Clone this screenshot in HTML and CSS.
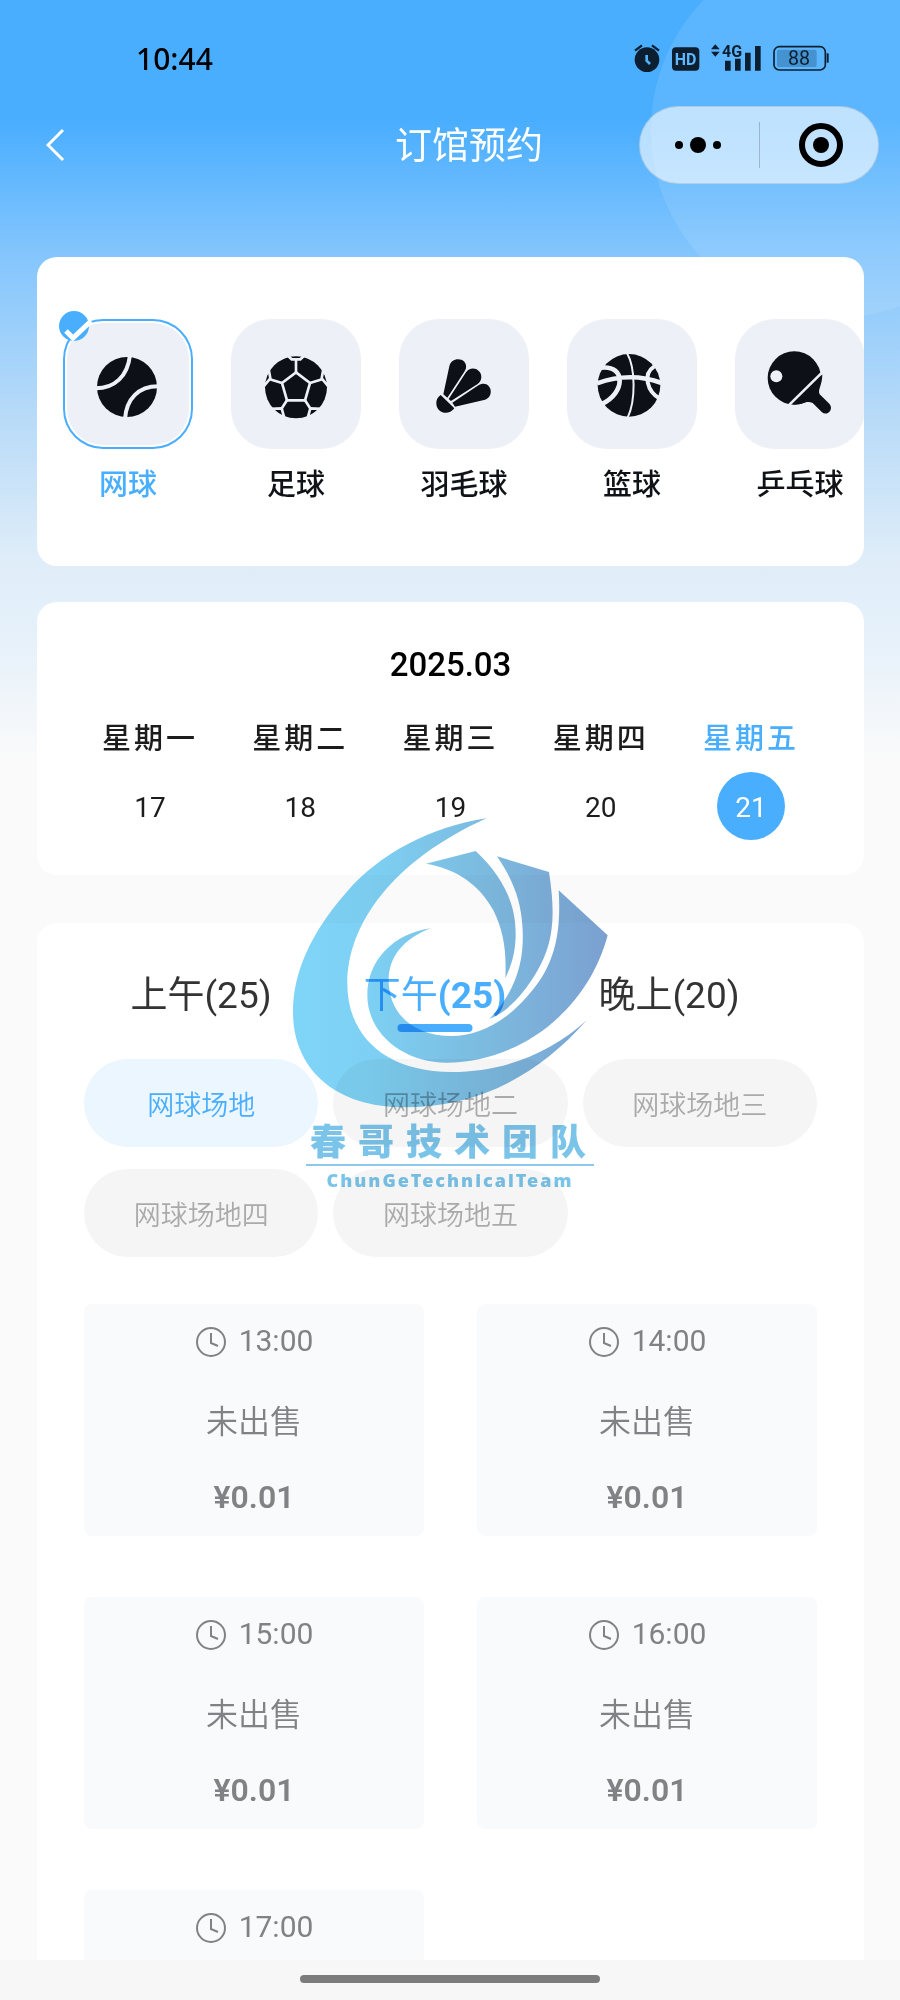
FILE: index.html
```html
<!DOCTYPE html>
<html lang="zh-CN">
<head>
    <meta charset="UTF-8">
    <meta name="viewport" content="width=device-width, initial-scale=1">
    <title>订馆预约</title>
    <link rel="stylesheet" href="styles.css">
</head>
<body>
    <div class="app">
        <header class="header">
            <div class="status-bar">
                <span class="clock">10:44</span>
                <div class="status-icons">
                    <svg class="icon-alarm" viewBox="0 0 78 84">
                        <circle cx="39" cy="47" r="37" fill="#0b1f30"/>
                        <path d="M3 20L24 4M54 4l21 16" stroke="#0b1f30" stroke-width="7" fill="none"/>
                        <path d="M38 33v17l10 10" stroke="#52b1fd" stroke-width="8" fill="none"/>
                    </svg>
                    <svg class="icon-hd" viewBox="0 0 82 84">
                        <rect x="0" y="10" width="82" height="70" rx="12" fill="#0b1f30"/>
                        <text x="41" y="62" text-anchor="middle" font-size="48">HD</text>
                    </svg>
                    <svg class="icon-signal" viewBox="0 0 150 84">
                        <path d="M0 16L13 1l13 15zM0 23h26L13 38z" fill="#0b1f30"/>
                        <text x="33" y="38" font-size="48">4G</text>
                        <path d="M42 50h17v30H42zM72 44h17v36H72zM102 26h17v54h-17zM132 6h17v74h-17z" fill="#0b1f30"/>
                    </svg>
                    <svg class="icon-battery" viewBox="0 0 168 84">
                        <rect x="3" y="8" width="154" height="70" rx="16" fill="none" stroke="#0b1f30" stroke-width="5"/>
                        <rect x="12" y="17" width="119" height="52" rx="6" fill="#4592d0"/>
                        <path d="M164 28v28" stroke="#0b1f30" stroke-width="6"/>
                        <text x="78" y="64" text-anchor="middle" font-size="59">88</text>
                    </svg>
                </div>
            </div>
            <nav class="nav-bar">
                <button class="back-btn" aria-label="返回">
                    <svg viewBox="0 0 20 34"><path d="M17 2L2 17l15 15" fill="none" stroke="#fff" stroke-width="3"/></svg>
                </button>
                <h1 class="title">订馆预约</h1>
                <div class="capsule">
                    <button class="capsule-btn" aria-label="更多">
                        <svg viewBox="0 0 48 48"><circle cx="5" cy="24" r="4"/><circle cx="24" cy="24" r="8"/><circle cx="43" cy="24" r="4"/></svg>
                    </button>
                    <button class="capsule-btn" aria-label="关闭">
                        <svg viewBox="0 0 48 48"><circle cx="24" cy="24" r="19" fill="none" stroke="#000" stroke-width="6"/><circle cx="24" cy="24" r="8"/></svg>
                    </button>
                </div>
            </nav>
        </header>

        <main class="content">
            <section class="card sports">
                <button class="sport active">
                    <span class="sport-icon">
                        <svg viewBox="0 0 390 390">
                            <circle cx="192" cy="204" r="90"/>
                            <path class="line" stroke-width="12" d="M201 108C194 172 155 208 98 208M286 202C226 202 190 240 186 300"/>
                        </svg>
                    </span>
                    <span class="sport-name">网球</span>
                    <svg class="check" viewBox="0 0 36 36">
                        <circle cx="16" cy="16" r="15" fill="#4aaeff"/>
                        <path d="M8 21l7 7L33 11" fill="none" stroke="#fff" stroke-width="5"/>
                    </svg>
                </button>
                <button class="sport">
                    <span class="sport-icon">
                        <svg viewBox="0 0 390 390">
                            <circle cx="195" cy="205" r="93"/>
                            <path class="line" stroke-width="8" d="M195 160L237 192L222 244H168L153 192Z"/>
                            <path class="line" stroke-width="8" d="M195 160V122M237 192L276 180M222 244L239 270M168 244L151 270M153 192L114 180"/>
                            <path class="line" stroke-width="8" d="M166 106L182 121H208L224 106M278 145L272 178L292 202M292 270L238 268L228 304M98 270L152 268L162 304M112 145L118 178L98 202"/>
                        </svg>
                    </span>
                    <span class="sport-name">足球</span>
                </button>
                <button class="sport">
                    <span class="sport-icon">
                        <svg viewBox="0 0 390 390">
                            <path d="M133 226L151 142C157 110 207 115 201 148C200 152 198 155 196 158L145 236Z"/>
                            <path d="M149 240L200 161C218 134 254 154 246 181C244 188 241 191 236 195L156 246Z"/>
                            <path d="M160 251L236 200C274 176 292 233 255 243L168 263Z"/>
                            <path d="M125 228L166 268C148 292 114 282 112 255C111 244 116 234 125 228Z"/>
                        </svg>
                    </span>
                    <span class="sport-name">羽毛球</span>
                </button>
                <button class="sport">
                    <span class="sport-icon">
                        <svg viewBox="0 0 390 390">
                            <circle cx="186" cy="199" r="94"/>
                            <path class="line" stroke-width="6" d="M180 102C206 148 206 245 182 296"/>
                            <path class="line" stroke-width="14" d="M90 193Q190 157 284 192M104 146C176 138 176 222 104 255"/>
                            <path class="line" stroke-width="12" d="M262 142C226 165 240 218 280 240"/>
                        </svg>
                    </span>
                    <span class="sport-name">篮球</span>
                </button>
                <button class="sport">
                    <span class="sport-icon">
                        <svg viewBox="0 0 390 390">
                            <circle cx="178" cy="177" r="80"/>
                            <path d="M262 166C262 200 247 212 254 226L283 254C298 272 276 292 261 280L233 252C212 243 204 259 172 256Z"/>
                            <circle class="ball" cx="124" cy="172" r="18"/>
                            <path class="line" stroke-width="8" d="M158 262L264 158"/>
                        </svg>
                    </span>
                    <span class="sport-name">乒乓球</span>
                </button>
            </section>

            <section class="card calendar">
                <h2 class="month">2025.03</h2>
                <div class="week">
                    <button class="day"><span class="weekday">星期一</span><span class="date">17</span></button>
                    <button class="day"><span class="weekday">星期二</span><span class="date">18</span></button>
                    <button class="day"><span class="weekday">星期三</span><span class="date">19</span></button>
                    <button class="day"><span class="weekday">星期四</span><span class="date">20</span></button>
                    <button class="day active"><span class="weekday">星期五</span><span class="date">21</span></button>
                </div>
            </section>

            <section class="card booking">
                <div class="tabs">
                    <button class="tab">上午(25)</button>
                    <button class="tab active">下午<b>(25)</b></button>
                    <button class="tab">晚上(20)</button>
                </div>
                <div class="courts">
                    <button class="court active">网球场地</button>
                    <button class="court">网球场地二</button>
                    <button class="court">网球场地三</button>
                    <button class="court">网球场地四</button>
                    <button class="court">网球场地五</button>
                </div>
                <div class="slots">
                    <div class="slot">
                        <div class="time"><svg viewBox="0 0 32 32"><circle cx="16" cy="17" r="14"/><path d="M16 8v10l7 3"/></svg>13:00</div>
                        <div class="state">未出售</div>
                        <div class="price">¥0.01</div>
                    </div>
                    <div class="slot">
                        <div class="time"><svg viewBox="0 0 32 32"><circle cx="16" cy="17" r="14"/><path d="M16 8v10l7 3"/></svg>14:00</div>
                        <div class="state">未出售</div>
                        <div class="price">¥0.01</div>
                    </div>
                    <div class="slot">
                        <div class="time"><svg viewBox="0 0 32 32"><circle cx="16" cy="17" r="14"/><path d="M16 8v10l7 3"/></svg>15:00</div>
                        <div class="state">未出售</div>
                        <div class="price">¥0.01</div>
                    </div>
                    <div class="slot">
                        <div class="time"><svg viewBox="0 0 32 32"><circle cx="16" cy="17" r="14"/><path d="M16 8v10l7 3"/></svg>16:00</div>
                        <div class="state">未出售</div>
                        <div class="price">¥0.01</div>
                    </div>
                    <div class="slot">
                        <div class="time"><svg viewBox="0 0 32 32"><circle cx="16" cy="17" r="14"/><path d="M16 8v10l7 3"/></svg>17:00</div>
                    </div>
                </div>
            </section>
        </main>

        <footer class="bottom-bar"><div class="home-indicator"></div></footer>

        <!-- team watermark -->
        <div class="watermark">
            <svg viewBox="60 50 960 880">
                <defs>
                    <linearGradient id="wm" gradientUnits="userSpaceOnUse" x1="69" y1="0" x2="1013" y2="0">
                        <stop offset="0" stop-color="#7fd5f8"/>
                        <stop offset="0.25" stop-color="#7dd0f3"/>
                        <stop offset="0.6" stop-color="#7cbbe0"/>
                        <stop offset="1" stop-color="#7ba0d0"/>
                    </linearGradient>
                </defs>
                <g fill="url(#wm)">
                    <path d="M650 54C480 80 330 160 230 275C120 400 69 520 69 635C69 810 200 920 400 921C620 921 800 830 950 660C840 760 700 815 545 815C350 815 232 710 232 550C232 370 370 180 650 54Z"/>
                    <path d="M482 384C370 400 292 480 292 585C292 700 400 787 530 787C740 787 950 640 1013 405L866 270C874 400 855 500 770 590C700 670 620 707 545 707C430 707 356 640 356 540C356 470 400 415 482 384Z"/>
                    <path d="M681 168L837 215C858 350 850 430 800 515C755 590 710 635 658 656C740 570 765 480 757 375C752 300 730 240 681 168Z"/>
                    <path d="M468 190L617 152C700 230 737 310 737 400C737 450 727 490 706 533C710 450 700 390 670 330C630 255 560 205 468 190Z"/>
                </g>
            </svg>
            <div class="team-name">春哥技术团队</div>
            <div class="team-sub">ChunGeTechnicalTeam</div>
        </div>
    </div>
</body>
</html>
```

FILE: styles.css
```css
* { box-sizing: border-box; margin: 0; padding: 0; }
body {
    font-family: Roboto, "Noto Sans CJK SC", sans-serif;
    color: #0f1216;
    background-color: #fafafa;
}
button { border: none; background: none; font: inherit; color: inherit; cursor: pointer; }
svg { display: block; }

.app {
    position: relative;
    display: flex;
    flex-direction: column;
    height: 100vh;
    overflow: hidden;
    background: linear-gradient(to bottom, #4aaeff 0, #4aaeff 122px, #82c5fd 250px, #b9dbf8 420px, #dfedf9 560px, #e6f1fa 640px, #fafafa 760px);
}
/* pale bubble in the top right corner */
.app::before {
    content: "";
    position: absolute;
    top: -57px; right: -125px;
    width: 374px; height: 374px;
    border-radius: 50%;
    background-color: rgba(255, 255, 255, 0.1);
}

/* header */
.header { position: relative; padding-top: 40px; }
.status-bar {
    display: flex; justify-content: space-between; align-items: center;
    height: 36px; padding: 0 71px 0 136px;
}
.clock { font-family: "Noto Sans", sans-serif; font-size: 30px; font-weight: 500; color: #000; }
.status-icons { display: flex; gap: 12px; }
.status-icons svg { height: 28px; overflow: visible; }
.status-icons text { font-family: Roboto, sans-serif; font-weight: 700; fill: #0b1f30; }
.status-icons .icon-hd text { fill: #5db6fe; }
.status-icons .icon-battery text { font-weight: 400; }

.nav-bar {
    display: grid;
    grid-template-columns: 258px 1fr 240px;
    align-items: center;
    margin-top: 30px;
    padding: 0 21px 0 41px;
}
.back-btn { width: 40px; height: 60px; padding-left: 5px; }
.back-btn svg { width: 20px; height: 34px; }
.title { padding-top: 4px; font-size: 37px; font-weight: 400; color: #fff; text-align: center; line-height: 50px; }
.capsule {
    display: flex;
    height: 78px;
    border: 1px solid rgba(0, 0, 0, 0.1);
    border-radius: 39px;
    background-color: rgba(255, 255, 255, 0.6);
}
.capsule-btn { flex: 1; display: flex; justify-content: center; align-items: center; position: relative; padding-right: 4px; }
.capsule-btn svg { width: 48px; height: 48px; }
.capsule-btn + .capsule-btn { padding: 0 0 0 4px; }
.capsule-btn + .capsule-btn::before {
    content: "";
    position: absolute; left: 0; top: 15px; bottom: 15px;
    width: 1px;
    background-color: rgba(0, 0, 0, 0.2);
}

/* cards */
.content { position: relative; flex: 1; min-height: 0; overflow: hidden; padding: 73px 36px 0 37px; }
.card { border-radius: 20px; background-color: #fff; }

.sports {
    display: flex;
    gap: 38px;
    padding: 62px 0 61px 26px;
    overflow: hidden;
}
.sport { position: relative; flex: none; width: 130px; }
.sport-icon {
    display: block;
    height: 130px;
    border-radius: 40px;
    background-color: #edf0f6;
    overflow: hidden;
}
.sport-icon svg { width: 130px; height: 130px; fill: #0d1117; }
.sport-icon .line { fill: none; stroke: #edf0f6; }
.sport-icon .ball { fill: #edf0f6; }
.sport-name { display: block; margin-top: 16px; font-size: 29px; font-weight: 500; line-height: 40px; }
.sport.active .sport-icon {
    box-shadow: inset 0 0 0 2px #4aaeff, inset 0 0 0 4px #fff;
}
.sport.active .sport-name { color: #4aaeff; }
.check { position: absolute; left: -5px; top: -9px; width: 36px; height: 36px; }

.calendar { margin-top: 36px; padding: 43px 38px 35px; }
.month { font-size: 33px; font-weight: 500; line-height: 40px; text-align: center; color: #000; }
.week { display: flex; margin-top: 34px; }
.day { flex: 1; display: flex; flex-direction: column; align-items: center; color: #1c1c1c; }
.weekday { font-size: 29px; font-weight: 500; line-height: 40px; letter-spacing: 3px; }
.date {
    width: 68px; height: 68px;
    margin-top: 13px;
    border-radius: 50%;
    font-size: 28px; line-height: 71px;
}
.day.active .weekday { color: #4aaeff; }
.day.active .date { background-color: #4aaeff; color: #fff; }

.booking { margin-top: 48px; padding: 47px 47px 46px; }
.tabs { display: flex; padding-right: 31px; }
.tab {
    flex: 1;
    position: relative;
    padding-bottom: 10px;
    font-size: 37px; font-weight: 400; line-height: 52px; color: #333;
}
.tab b { font-weight: 700; }
.tab.active { color: #4aaeff; }
.tab.active::after {
    content: "";
    position: absolute; left: 50%; bottom: 0;
    width: 75px; height: 8px;
    transform: translateX(-50%);
    border-radius: 4px;
    background-color: #4aaeff;
}

.courts {
    display: grid;
    grid-template-columns: repeat(3, 1fr);
    gap: 22px 15px;
    margin-top: 27px;
}
.court {
    height: 88px;
    padding-top: 6px;
    border-radius: 44px;
    background-color: #f5f5f5;
    font-size: 27px; font-weight: 350; line-height: 40px; color: #aaa;
}
.court.active { background-color: #ebf6ff; color: #4aaeff; }

.slots {
    display: grid;
    grid-template-columns: repeat(2, 1fr);
    gap: 61px 53px;
    margin-top: 47px;
}
.slot {
    min-height: 232px;
    padding: 17px 0 19px;
    border-radius: 8px;
    background-color: #f9fafc;
    color: #808285;
    text-align: center;
    line-height: 40px;
}
.time { display: flex; justify-content: center; align-items: center; gap: 12px; font-size: 30px; }
.time svg { width: 32px; height: 32px; fill: none; stroke: #808285; stroke-width: 2; }
.state { margin-top: 41px; font-size: 32px; font-weight: 350; }
.price { margin-top: 35px; font-size: 32px; font-weight: 600; }

.bottom-bar {
    position: relative;
    display: flex; justify-content: center;
    height: 40px; padding-top: 15px;
    background-color: #f7f7f7;
}
.home-indicator { width: 300px; height: 8px; border-radius: 4px; background-color: #7c7c7c; }

/* watermark floats over the cards */
.watermark {
    position: absolute;
    top: 817px; left: 50%;
    width: 320px;
    transform: translateX(-50%);
    mix-blend-mode: multiply;
    pointer-events: none;
    text-align: center;
    color: #7ac4ea;
}
.watermark svg { width: 100%; }
.team-name {
    margin: 12px 16px 0;
    padding-left: 4px;
    border-bottom: 2px solid #8cc8ec;
    font-size: 36px; font-weight: 900; line-height: 42px; letter-spacing: 12px;
    white-space: nowrap;
}
.team-sub {
    font-family: "Noto Sans", sans-serif;
    font-size: 18px; font-weight: 900; line-height: 28px; letter-spacing: 2px;
}
```
